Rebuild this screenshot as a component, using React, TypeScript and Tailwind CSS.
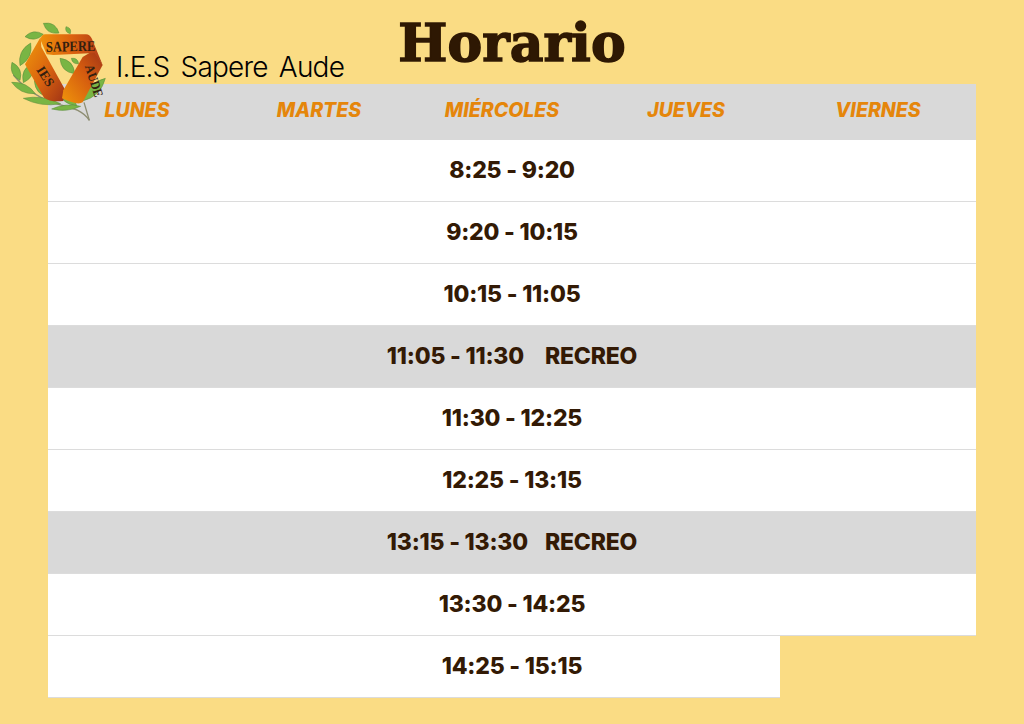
const leaves: [number, number, number, number, number][] = [
  [130, 25, 177, 54, 11],
  [75, 65, 130, 58, 10],
  [198, 35, 211, 56, 6],
  [60, 152, 92, 84, 12],
  [36, 142, 60, 196, 11],
  [70, 203, 98, 145, 12],
  [35, 202, 106, 236, 10],
  [103, 197, 150, 246, 13],
  [70, 250, 182, 266, 9],
  [174, 225, 230, 272, 12],
  [155, 282, 242, 274, 7],
  [180, 130, 224, 176, 12],
  [214, 130, 236, 146, 6],
  [248, 258, 316, 190, 13],
];

function leafPath([x1, y1, x2, y2, w]: [number, number, number, number, number]) {
  const mx = (x1 + x2) / 2;
  const my = (y1 + y2) / 2;
  const dx = x2 - x1;
  const dy = y2 - y1;
  const len = Math.hypot(dx, dy);
  const nx = (-dy / len) * w * 2.2;
  const ny = (dx / len) * w * 2.2;
  return `M${x1} ${y1}Q${mx + nx} ${my + ny} ${x2} ${y2}Q${mx - nx} ${my - ny} ${x1} ${y1}Z`;
}

function Logo() {
  return (
    <svg viewBox="0 0 360 345" className="absolute left-0 top-[15px] h-[115px] w-[120px]">
      <defs>
        <linearGradient id="top" x1="0" y1="0" x2="1" y2="0">
          <stop offset="0" stopColor="#ee8f0b" />
          <stop offset="0.5" stopColor="#dc620f" />
          <stop offset="1" stopColor="#b03c18" />
        </linearGradient>
        <linearGradient id="left" x1="0" y1="0" x2="1" y2="1">
          <stop offset="0" stopColor="#f09a0b" />
          <stop offset="0.55" stopColor="#d9620f" />
          <stop offset="1" stopColor="#a03416" />
        </linearGradient>
        <linearGradient id="right" x1="0" y1="1" x2="1" y2="0">
          <stop offset="0" stopColor="#f0950b" />
          <stop offset="0.55" stopColor="#d55c0f" />
          <stop offset="1" stopColor="#a03416" />
        </linearGradient>
      </defs>
      <path d="M40 180C70 215 110 250 175 268C210 278 245 282 268 316" fill="none" stroke="#8d8d72" strokeWidth="4" />
      <path d="M252 262L268 316" fill="none" stroke="#8d8d72" strokeWidth="4" />
      {leaves.map((l, i) => (
        <path key={i} d={leafPath(l)} fill="#79b544" stroke="#55863a" strokeWidth="1.5" />
      ))}
      <path d="M122 66L75 148L132 248Q150 262 190 258L194 222L124 96Z" fill="url(#left)" />
      <path d="M282 106L308 150L248 262Q232 272 186 250L190 226L248 126Z" fill="url(#right)" />
      <path d="M134 58H258Q270 58 276 72L308 150L284 114L160 120L140 118L122 76Q122 60 134 58Z" fill="url(#top)" />
      <g fontFamily="'Liberation Serif', serif" fontWeight="700" fill="#33200f">
        <text x="138" y="110" fontSize="44" textLength="148" lengthAdjust="spacingAndGlyphs" transform="rotate(-1 138 110)">SAPERE</text>
        <text x="108" y="164" fontSize="40" textLength="64" lengthAdjust="spacingAndGlyphs" transform="rotate(58 108 164)">IES</text>
        <text x="254" y="154" fontSize="40" textLength="100" lengthAdjust="spacingAndGlyphs" transform="rotate(72 254 154)">AUDE</text>
      </g>
    </svg>
  );
}

const days: [string, string][] = [
  ["LUNES", "w-[178px]"],
  ["MARTES", "w-[186px]"],
  ["MIÉRCOLES", "w-[180px]"],
  ["JUEVES", "w-[188px]"],
  ["VIERNES", "w-[196px]"],
];

function Row({ children, gray }: { children: React.ReactNode; gray?: boolean }) {
  return (
    <div
      className={`flex h-[62px] items-center justify-center border-b border-[#dcdcdc] text-[23px] font-extrabold tracking-[-0.2px] text-[#331a05] ${
        gray ? "bg-[#d9d9d9]" : "bg-white"
      }`}
    >
      {children}
    </div>
  );
}

export default function App() {
  return (
    <div className="relative h-[724px] w-[1024px] overflow-hidden bg-[#fadc84] font-['Inter',sans-serif]">
      <header className="relative h-[84px]">
        <h1 className="pt-[5px] text-center font-['DejaVu_Serif',serif] text-[52px] font-bold leading-[76px] tracking-[0.1px] text-[#2e1803] [-webkit-text-stroke:1.5px_#2e1803]">
          Horario
        </h1>
        <p className="absolute left-[116px] top-[49px] font-['Inter',sans-serif] text-[28px] font-light leading-[36px] tracking-[-0.8px] text-black [word-spacing:4px]">
          I.E.S Sapere Aude
        </p>
      </header>
      <main className="mx-12 w-[928px]">
        <div className="flex h-[56px] items-center bg-[#d9d9d9] pb-[2px]">
          {days.map(([d, w]) => (
            <div key={d} className={`${w} text-center text-[19.5px] font-extrabold italic text-[#e5860b]`}>
              {d}
            </div>
          ))}
        </div>
        <Row>8:25 - 9:20</Row>
        <Row>9:20 - 10:15</Row>
        <Row>10:15 - 11:05</Row>
        <Row gray>
          <span className="mr-[21px]">11:05 - 11:30</span>
          <span>RECREO</span>
        </Row>
        <Row>11:30 - 12:25</Row>
        <Row>12:25 - 13:15</Row>
        <Row gray>
          <span className="mr-[17px]">13:15 - 13:30</span>
          <span>RECREO</span>
        </Row>
        <Row>13:30 - 14:25</Row>
        <div className="w-[732px]">
          <Row>
            <span className="pl-[196px]">14:25 - 15:15</span>
          </Row>
        </div>
      </main>
      <Logo />
    </div>
  );
}
